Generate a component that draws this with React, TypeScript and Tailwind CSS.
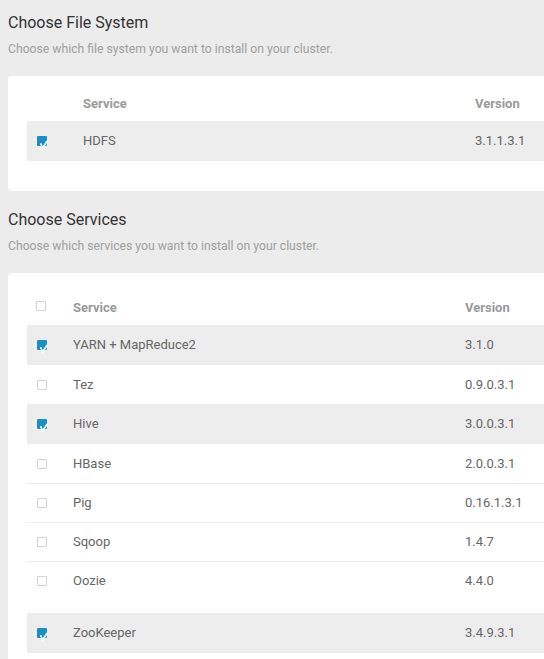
import React from "react";

function Checked() {
  return (
    <svg width="12" height="14" viewBox="0 0 12 14" className="block">
      <rect x="0" y="0" width="10" height="10" rx="1" fill="#1a8fc7" />
      <path d="M3.6 7.2 L5.6 12 L10.2 5" fill="none" stroke="#ffffff" strokeWidth="1.6" />
    </svg>
  );
}

function Unchecked() {
  return <div className="w-[10px] h-[10px] border border-[#d2d2d2] rounded-[1px] bg-white" />;
}

type Row = { name: string; version: string; checked: boolean };

function Table({ rows, firstCol, headerCheckbox, padTop }: { rows: Row[]; firstCol: string; headerCheckbox: boolean; padTop: string }) {
  return (
    <div className={`pl-[19px] ${padTop}`}>
      <div className="flex h-[34px] items-center">
        <div className={`${firstCol} pl-[9px] shrink-0`}>
          {headerCheckbox ? <div className="-mt-[5px]"><Unchecked /></div> : null}
        </div>
        <div className="w-[392px] shrink-0 text-[13px] font-bold text-[#9a9a9a]">Service</div>
        <div className="flex-1 text-[13px] font-bold text-[#9a9a9a]">Version</div>
      </div>
      {rows.map((r, i) => (
        <React.Fragment key={r.name}>
          {r.name === "ZooKeeper" ? <div className="h-[13px]" /> : null}
          <div
            className={`flex items-center ${r.checked ? "h-[40px] bg-[#ededed]" : "h-[39px] bg-white"} ${
              !r.checked && i > 0 && !rows[i - 1].checked ? "border-t border-[#ebebeb]" : ""
            }`}
          >
            <div className={`${firstCol} pl-[10px] shrink-0 flex items-center`}>
              {r.checked ? <div className="pt-[4px]"><Checked /></div> : <Unchecked />}
            </div>
            <div className="w-[392px] shrink-0 text-[13px] text-[#666666]">{r.name}</div>
            <div className="flex-1 text-[13px] text-[#666666]">{r.version}</div>
          </div>
        </React.Fragment>
      ))}
    </div>
  );
}

export default function App() {
  const fs: Row[] = [{ name: "HDFS", version: "3.1.1.3.1", checked: true }];
  const services: Row[] = [
    { name: "YARN + MapReduce2", version: "3.1.0", checked: true },
    { name: "Tez", version: "0.9.0.3.1", checked: false },
    { name: "Hive", version: "3.0.0.3.1", checked: true },
    { name: "HBase", version: "2.0.0.3.1", checked: false },
    { name: "Pig", version: "0.16.1.3.1", checked: false },
    { name: "Sqoop", version: "1.4.7", checked: false },
    { name: "Oozie", version: "4.4.0", checked: false },
    { name: "ZooKeeper", version: "3.4.9.3.1", checked: true },
  ];
  return (
    <div className="w-[544px] h-[659px] overflow-hidden bg-[#ececec]" style={{ fontFamily: "Roboto, 'Open Sans', sans-serif" }}>
      <div className="pt-[13px]">
        <h1 className="ml-[8px] text-[16px] leading-[20px] text-[#333333]">Choose File System</h1>
        <p className="ml-[8px] mt-[8px] text-[12.2px] leading-[16px] text-[#a0a0a0]">Choose which file system you want to install on your cluster.</p>
        <div className="mt-[19px] ml-[8px] bg-white rounded-l-[4px] pb-[30px]">
          <Table rows={fs} firstCol="w-[56px]" headerCheckbox={false} padTop="pt-[11px]" />
        </div>
        <h1 className="ml-[8px] mt-[19px] text-[16px] leading-[20px] text-[#333333]">Choose Services</h1>
        <p className="ml-[8px] mt-[8px] text-[12.2px] leading-[16px] text-[#a0a0a0]">Choose which services you want to install on your cluster.</p>
        <div className="mt-[19px] ml-[8px] bg-white rounded-l-[4px] min-h-[400px]">
          <Table rows={services} firstCol="w-[46px]" headerCheckbox={true} padTop="pt-[18px]" />
        </div>
      </div>
    </div>
  );
}
